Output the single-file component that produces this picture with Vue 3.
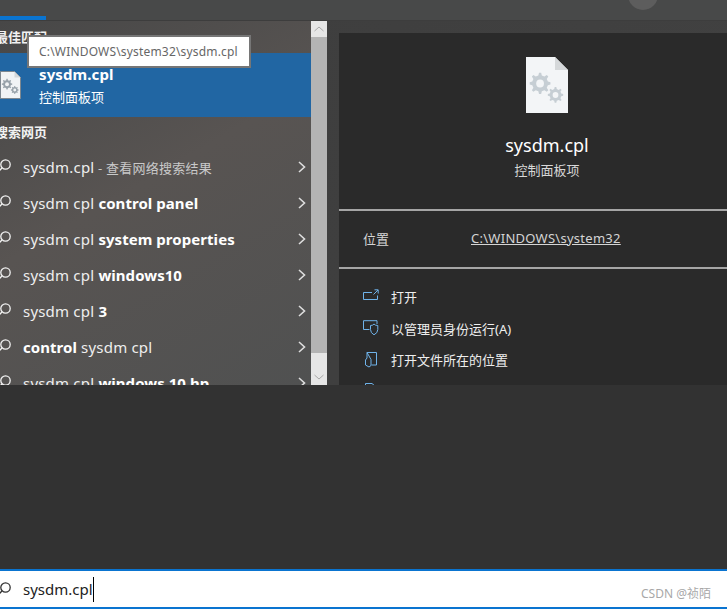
<script setup>
const rows = [
  [{ t: 'sysdm cpl ' }, { t: 'control panel', b: true }],
  [{ t: 'sysdm cpl ' }, { t: 'system properties', b: true }],
  [{ t: 'sysdm cpl ' }, { t: 'windows10', b: true }],
  [{ t: 'sysdm cpl ' }, { t: '3', b: true }],
  [{ t: 'control', b: true }, { t: ' sysdm cpl' }],
  [{ t: 'sysdm cpl ' }, { t: 'windows 10 hp', b: true }],
]
const gear = 'M0 -10 L2 -10 L2.6 -7.4 L5 -6.4 L7.2 -7.8 L8.6 -6.4 L7.2 -4.2 L8.2 -1.8 L10.6 -1.2 L10.6 1 L8.2 1.6 L7.2 4 L8.6 6.2 L7.2 7.6 L5 6.2 L2.6 7.2 L2 9.8 L0 9.8 L-.6 7.2 L-3 6.2 L-5.2 7.6 L-6.6 6.2 L-5.2 4 L-6.2 1.6 L-8.6 1 L-8.6 -1.2 L-6.2 -1.8 L-5.2 -4.2 L-6.6 -6.4 L-5.2 -7.8 L-3 -6.4 L-.6 -7.4 Z'
</script>

<template>
  <div class="page">
    <header class="topbar">
      <span class="tab"></span>
      <span class="avatar"></span>
    </header>
    <main class="main">
      <section class="left">
        <div class="list">
          <div class="head first">最佳匹配</div>
          <div class="best">
            <svg class="file small" viewBox="0 0 42 56">
              <path d="M1 1H29L41 13V55H1Z" fill="#f1f3f5" stroke="#7f8890" stroke-width="2" />
              <path d="M29 1L41 13H29Z" fill="#d5d8da" />
              <g fill="#98a2aa">
                <g transform="translate(13 26.5) scale(1.08)"><path :d="gear" /><circle cx="1" r="3.6" fill="#f1f3f5" /></g>
                <g transform="translate(28.7 38) scale(.8)"><path :d="gear" /><circle cx="1" r="3.6" fill="#f1f3f5" /></g>
              </g>
            </svg>
            <div class="best-text">
              <div class="best-name">sysdm.cpl</div>
              <div class="best-sub">控制面板项</div>
            </div>
          </div>
          <div class="head second">搜索网页</div>
          <div class="row">
            <svg class="mag" viewBox="0 0 12 12"><circle cx="5.5" cy="5.5" r="4.7" /><path d="M2 9L-3 14" /></svg>
            <span class="label">sysdm.cpl<span class="hint"> - 查看网络搜索结果</span></span>
            <svg class="chev" viewBox="0 0 8 12"><path d="M1 1L6.5 6L1 11" /></svg>
          </div>
          <div v-for="(r, i) in rows" :key="i" class="row">
            <svg class="mag" viewBox="0 0 12 12"><circle cx="5.5" cy="5.5" r="4.7" /><path d="M2 9L-3 14" /></svg>
            <span class="label"><span v-for="(s, j) in r" :key="j" :class="{ strong: s.b }">{{ s.t }}</span></span>
            <svg class="chev" viewBox="0 0 8 12"><path d="M1 1L6.5 6L1 11" /></svg>
          </div>
        </div>
        <div class="tooltip">C:\WINDOWS\system32\sysdm.cpl</div>
      </section>

      <aside class="scrollbar">
        <div class="sb-btn"><svg viewBox="0 0 10 6"><path d="M.5 5L5 1L9.5 5" /></svg></div>
        <div class="sb-thumb"></div>
        <div class="sb-track"><svg viewBox="0 0 10 6"><path d="M.5 1L5 5L9.5 1" /></svg></div>
      </aside>

      <section class="detail">
        <div class="hero">
          <svg class="file big" viewBox="0 0 42 56">
            <path d="M0 0H29L42 13V56H0Z" fill="#f3f5f7" />
            <path d="M29 0L42 13H29Z" fill="#d5d8da" />
            <g fill="#c6ced4">
              <g transform="translate(13 26.5) scale(1.08)"><path :d="gear" /><circle cx="1" r="3.6" fill="#f3f5f7" /></g>
              <g transform="translate(28.7 38) scale(.8)"><path :d="gear" /><circle cx="1" r="3.6" fill="#f3f5f7" /></g>
            </g>
          </svg>
          <div class="hero-name">sysdm.cpl</div>
          <div class="hero-sub">控制面板项</div>
        </div>
        <div class="location">
          <span class="loc-key">位置</span>
          <span class="loc-val">C:\WINDOWS\system32</span>
        </div>
        <div class="actions">
          <div class="action">
            <svg viewBox="0 0 16 16"><path d="M9 3.5H.5V10.5H14.5V6.5M10.5 5.5L15 1M11.5 .8H15.2V4.5" /></svg>
            <span>打开</span>
          </div>
          <div class="action">
            <svg viewBox="0 0 16 16"><path d="M14 4V.7H.5V9.5H6.5" /><path d="M7.5 5.5Q10 5.5 11 4Q12 5.5 14.8 5.5V9.5Q14.8 13 11 14.8Q7.5 13 7.5 9.5Z" /></svg>
            <span>以管理员身份运行(A)</span>
          </div>
          <div class="action">
            <svg viewBox="0 0 16 16"><path d="M4 .5H13.5V13H8.5M4 .5V6L2.5 8V13L6 15L8 13.5V7.5L4 .5" /></svg>
            <span>打开文件所在的位置</span>
          </div>
          <div class="action">
            <svg viewBox="0 0 16 16"><path d="M2.5 15V.5H9L13 4V15" /></svg>
            <span></span>
          </div>
        </div>
      </section>
    </main>
    <div class="filler"></div>
    <footer class="search">
      <svg class="mag" viewBox="0 0 12 12"><circle cx="5.5" cy="5.5" r="4.7" /><path d="M2 9L-3 14" /></svg>
      <span class="query">sysdm.cpl</span>
      <span class="caret"></span>
      <span class="mark">CSDN @祯陌</span>
    </footer>
  </div>
</template>

<style>
html, body { margin: 0; background: #323232; }
</style>

<style scoped>
.page {
  width: 727px;
  height: 609px;
  display: flex;
  flex-direction: column;
  overflow: hidden;
  font-family: "Noto Sans", "Noto Sans CJK SC", sans-serif;
  color: #fff;
  background: #323232;
}
.topbar {
  height: 20px;
  flex: none;
  position: relative;
  overflow: hidden;
  background: #484949;
  border-bottom: 1px solid #3d3d3d;
}
.tab {
  position: absolute;
  left: 0;
  bottom: 0;
  width: 46px;
  height: 4px;
  background: #0a74d0;
}
.avatar {
  position: absolute;
  left: 628px;
  top: -20px;
  width: 30px;
  height: 30px;
  border-radius: 50%;
  background: #5d5d5d;
}
.main {
  height: 364px;
  flex: none;
  display: flex;
  background: linear-gradient(100deg, #3d3d3d, #414141);
}
.left {
  width: 311px;
  flex: none;
  position: relative;
  overflow: hidden;
  background: linear-gradient(150deg, #474747 0%, #585452 45%, #505151 100%);
}
.list { height: 364px; overflow: hidden; }
.head {
  font-size: 13px;
  font-weight: 700;
  line-height: 18px;
  margin-left: -5px;
  color: #f2f2f2;
}
.head.first { padding: 7px 0 7px; }
.head.second { padding: 6px 0 8px; }
.best {
  height: 64px;
  display: flex;
  align-items: center;
  gap: 18px;
  background: #2166a3;
}
.file { display: block; flex: none; }
.file.small { width: 21px; height: 28px; }
.best-name { font-size: 15px; font-weight: 700; line-height: 20px; letter-spacing: .1px; }
.best-sub { font-size: 13px; line-height: 20px; margin-top: 3px; }
.row {
  height: 36px;
  display: flex;
  align-items: center;
  position: relative;
  padding-left: 23px;
  font-size: 15px;
  color: #eee;
  letter-spacing: .2px;
}
.mag {
  position: absolute;
  left: 0;
  width: 12px;
  height: 12px;
  overflow: visible;
  fill: none;
  stroke: #f2f2f2;
  stroke-width: 1.3;
}
.row .mag { top: 10px; }
.label { white-space: nowrap; margin-top: -1px; }
.strong { font-weight: 700; color: #fff; letter-spacing: .05px; }
.hint { font-size: 13px; color: #c9c9c9; letter-spacing: .25px; }
.chev {
  position: absolute;
  left: 298px;
  top: 12px;
  width: 8px;
  height: 12px;
  fill: none;
  stroke: #dedede;
  stroke-width: 1.6;
}
.tooltip {
  position: absolute;
  left: 27px;
  top: 14px;
  width: 211px;
  height: 29px;
  line-height: 29px;
  padding-left: 10px;
  box-sizing: content-box;
  width: 210px;
  background: #fff;
  border: 2px solid #767676;
  font-size: 12px;
  letter-spacing: .18px;
  color: #666;
  white-space: nowrap;
}
.scrollbar {
  width: 16px;
  flex: none;
  display: flex;
  flex-direction: column;
  background: #e6e6e6;
}
.sb-btn {
  height: 16px;
  flex: none;
  display: flex;
  align-items: center;
  justify-content: center;
  background: #e6e6e6;
}
.scrollbar svg {
  width: 10px;
  height: 6px;
  fill: none;
  stroke: #a8a8a8;
  stroke-width: 1;
}
.sb-thumb { height: 316px; flex: none; background: #b4b4b4; }
.sb-track {
  flex: 1;
  display: flex;
  justify-content: center;
  padding-top: 21px;
  box-sizing: border-box;
}
.detail {
  width: 388px;
  flex: none;
  margin: 12px 0 0 12px;
  background: #2a2a2a;
  overflow: hidden;
}
.hero {
  height: 178px;
  box-sizing: border-box;
  padding: 24px 0 0 28px;
  display: flex;
  flex-direction: column;
  align-items: center;
  border-bottom: 2px solid #a5a5a5;
}
.file.big { width: 42px; height: 56px; }
.hero-name { font-size: 18px; line-height: 24px; margin-top: 20px; }
.hero-sub { font-size: 13px; line-height: 18px; margin-top: 4px; color: #d8d8d8; }
.location {
  height: 58px;
  box-sizing: border-box;
  display: flex;
  align-items: center;
  padding: 0 0 2px 24px;
  font-size: 13px;
  color: #d5d5d5;
  border-bottom: 2px solid #a5a5a5;
}
.loc-key { width: 108px; }
.loc-val { text-decoration: underline; letter-spacing: .27px; }
.actions { padding-top: 12px; }
.action {
  height: 31.5px;
  display: flex;
  align-items: center;
  padding-left: 24px;
  gap: 12px;
  font-size: 13px;
  color: #eee;
}
.action svg {
  width: 16px;
  height: 16px;
  flex: none;
  fill: none;
  stroke: #6fb3ea;
  stroke-width: 1;
}
.filler { flex: 1; background: #323232; }
.search {
  height: 40px;
  flex: none;
  box-sizing: border-box;
  position: relative;
  display: flex;
  align-items: center;
  padding-left: 23px;
  background: #fff;
  border-top: 2px solid #0a74d0;
  border-bottom: 2px solid #0a74d0;
  color: #222;
  font-size: 15px;
}
.search .mag { stroke: #333; top: 11px; }
.caret { width: 1px; height: 25px; background: #000; }
.mark {
  position: absolute;
  right: 16px;
  top: 15px;
  font-size: 12px;
  line-height: 16px;
  color: #a8a8a8;
}
</style>
